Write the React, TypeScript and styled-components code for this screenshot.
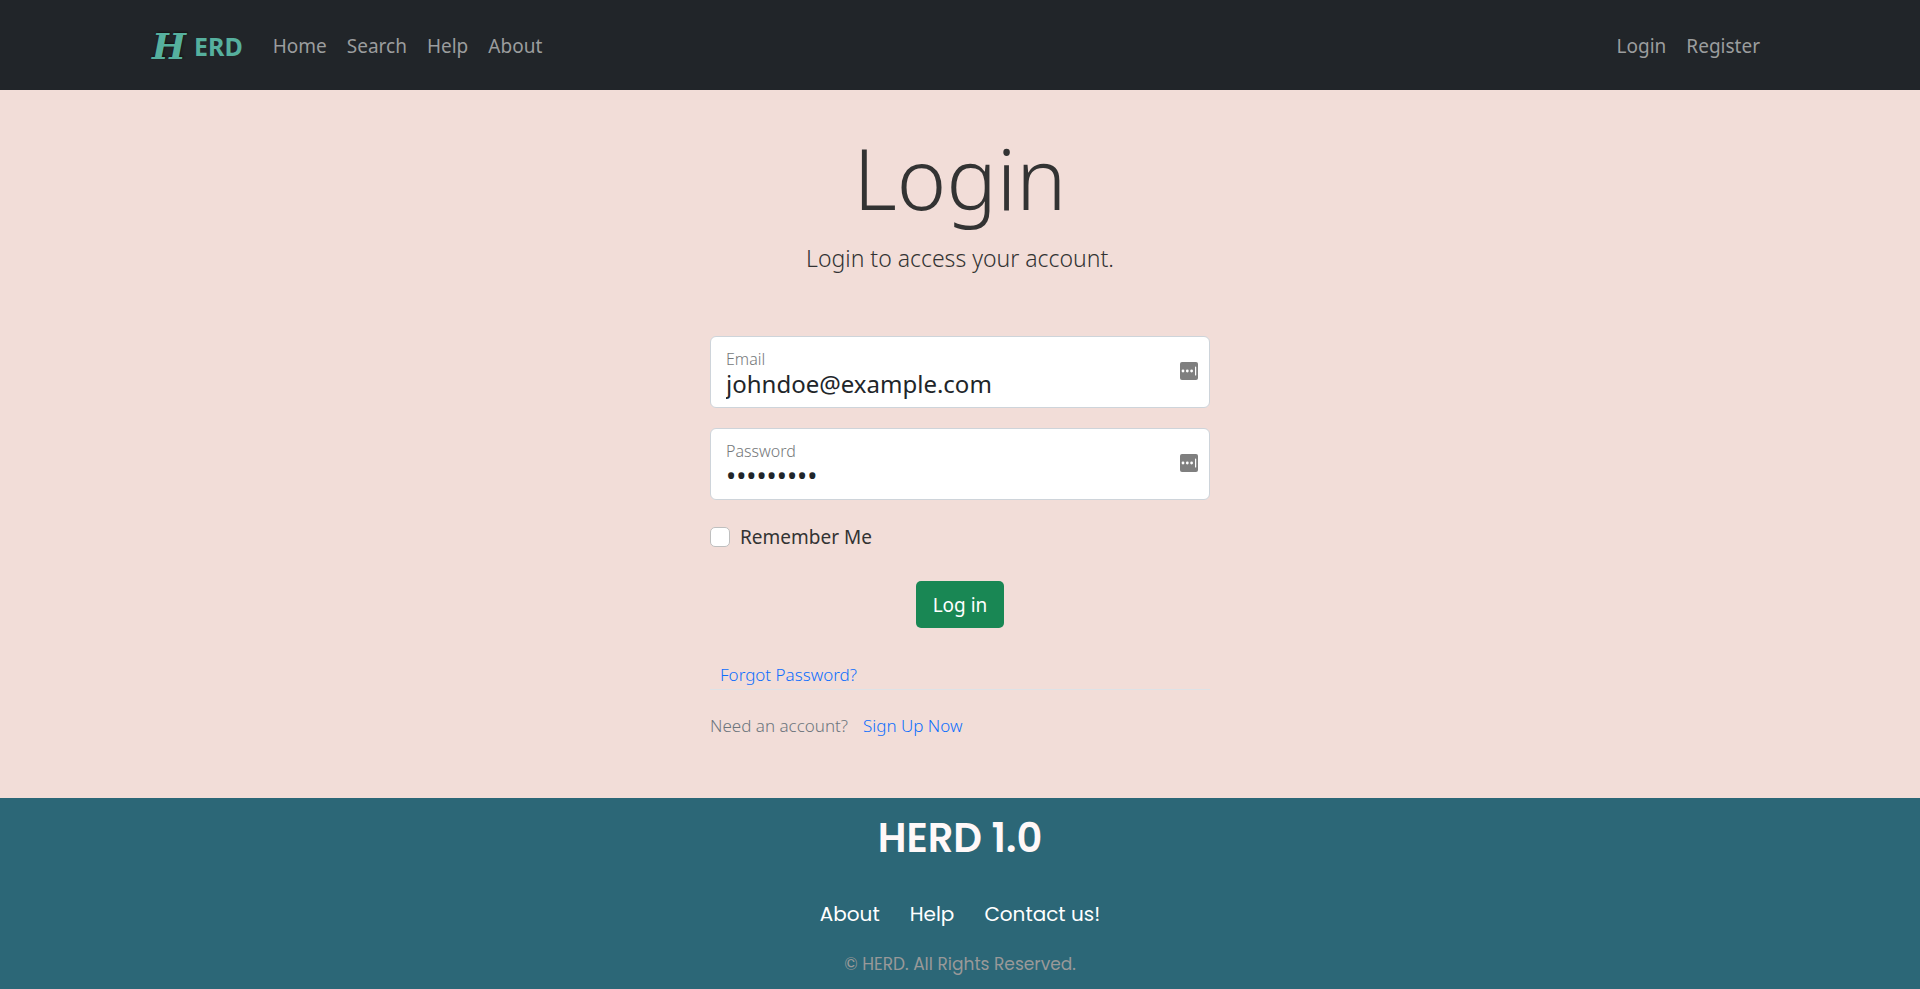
import React, { useState } from "react";
import styled, { createGlobalStyle } from "styled-components";

const sans = `"Segoe UI", "Noto Sans", "Open Sans", sans-serif`;
const geometric = `Poppins, Inter, sans-serif`;

const GlobalStyle = createGlobalStyle`
  *, *::before, *::after { box-sizing: border-box; }
  html, body, #root { min-height: 100vh; }
  body {
    margin: 0;
    background: #f2ddd8;
    color: #333;
    font-family: ${sans};
    font-size: 19px;
    line-height: 30px;
  }
  a { text-decoration: none; }
  h1, h2, p, ul { margin: 0; padding: 0; font-weight: 400; }
`;

const Page = styled.div`
  display: flex;
  flex-direction: column;
  min-height: 100vh;
`;

const Header = styled.header`
  background: #212529;
`;

const Container = styled.nav`
  display: flex;
  align-items: center;
  max-width: 1650px;
  min-height: 90px;
  margin: 0 auto;
  padding: 2px 15px 0;
`;

const Brand = styled.a`
  display: flex;
  align-items: center;
  gap: 8px;
  margin-right: 20px;
  padding-left: 2px;
  color: #56b09e;
  font-size: 25px;
  font-weight: 700;
`;

const Initial = styled.span`
  font-family: "DejaVu Serif", serif;
  font-size: 36px;
  font-style: italic;
  line-height: 36px;
  text-shadow: 1px -1px 2px #111;
`;

const NavList = styled.ul<{ $end?: boolean }>`
  display: flex;
  list-style: none;
  margin-left: ${(p) => (p.$end ? "auto" : "0")};
`;

const NavLink = styled.a`
  display: block;
  padding: 10px;
  color: #9b9d9e;
`;

const Main = styled.main`
  display: flex;
  flex-direction: column;
  align-items: center;
  padding: 36px 15px 57px;
`;

const Title = styled.h1`
  font-size: 84px;
  font-weight: 300;
  line-height: 104px;
`;

const Lead = styled.p`
  margin-top: 9px;
  font-size: 23px;
  font-weight: 300;
  line-height: 38px;
`;

const Form = styled.form`
  display: flex;
  flex-direction: column;
  width: 100%;
  max-width: 500px;
  margin-top: 59px;
`;

const Field = styled.div`
  display: flex;
  align-items: center;
  min-height: 72px;
  margin-bottom: 20px;
  padding: 12px 11px 8px 15px;
  background: #fff;
  border: 1px solid #ced4da;
  border-radius: 6px;

  svg {
    margin-bottom: 6px;
  }
`;

const FieldBody = styled.div`
  flex: 1;
  display: flex;
  flex-direction: column;
`;

const FieldLabel = styled.label`
  color: #75787a;
  font-size: 16px;
  font-weight: 300;
  line-height: 20px;
`;

const Input = styled.input`
  width: 100%;
  height: 30px;
  padding: 0;
  border: 0;
  outline: 0;
  background: transparent;
  color: #212529;
  font-family: ${sans};
  font-size: ${(p) => (p.type === "password" ? "27px" : "24px")};
  line-height: 30px;
`;

const Remember = styled.label`
  display: flex;
  align-items: center;
  gap: 10px;
  align-self: flex-start;
  margin-top: 2px;
`;

const Checkbox = styled.input`
  appearance: none;
  width: 20px;
  height: 20px;
  margin: 0;
  background: #fff;
  border: 1px solid #bfbfbf;
  border-radius: 5px;
  &:checked { background: #0d6efd; }
`;

const Submit = styled.button`
  align-self: center;
  height: 47px;
  margin-top: 29px;
  padding: 0 17px;
  border: 0;
  border-radius: 5px;
  background: #198754;
  color: #fff;
  font-family: ${sans};
  font-size: 19px;
`;

const Forgot = styled.div`
  margin-top: 33px;
  padding: 0 10px;
  border-bottom: 1px solid #dee2e6;
  font-size: 17px;
  font-weight: 300;
  line-height: 28px;
`;

const SignUp = styled.p`
  display: flex;
  gap: 15px;
  margin-top: 21px;
  color: #6c757d;
  font-size: 17px;
  font-weight: 300;
  line-height: 30px;
`;

const BlueLink = styled.a`
  color: #0d6efd;
`;

const Footer = styled.footer`
  flex: 1;
  display: flex;
  flex-direction: column;
  align-items: center;
  padding: 15px 15px 9px;
  background: #2c6777;
  font-family: ${geometric};
`;

const FooterTitle = styled.h2`
  color: #fff8f8;
  font-size: 40px;
  font-weight: 600;
  line-height: 50px;
`;

const FooterLinks = styled.nav`
  display: flex;
  gap: 30px;
  margin-top: 36px;
`;

const FooterLink = styled.a`
  color: #fff;
  font-size: 20px;
`;

const Copyright = styled.p`
  margin-top: 20px;
  color: #999;
  font-size: 17px;
`;

const ManagerIcon = () => (
  <svg width="18" height="18" viewBox="0 0 18 18" aria-hidden="true">
    <rect width="18" height="18" rx="2" fill="#7f7f7f" />
    <g fill="#fff">
      <circle cx="3" cy="9" r="1.4" />
      <circle cx="7.3" cy="9" r="1.4" />
      <circle cx="11.6" cy="9" r="1.4" />
      <rect x="15" y="4.5" width="1.2" height="9" rx="0.6" />
    </g>
  </svg>
);

interface TextFieldProps {
  id: string;
  label: string;
  type: string;
  initial: string;
}

const TextField = ({ id, label, type, initial }: TextFieldProps) => {
  const [value, setValue] = useState(initial);
  return (
    <Field>
      <FieldBody>
        <FieldLabel htmlFor={id}>{label}</FieldLabel>
        <Input id={id} type={type} value={value} onChange={(e) => setValue(e.target.value)} />
      </FieldBody>
      <ManagerIcon />
    </Field>
  );
};

const NavItems = ({ items, end }: { items: string[]; end?: boolean }) => (
  <NavList $end={end}>
    {items.map((item) => (
      <li key={item}>
        <NavLink href={`#${item.toLowerCase()}`}>{item}</NavLink>
      </li>
    ))}
  </NavList>
);

export default function App() {
  return (
    <Page>
      <GlobalStyle />
      <Header>
        <Container>
          <Brand href="#home">
            <Initial>H</Initial>
            <span>ERD</span>
          </Brand>
          <NavItems items={["Home", "Search", "Help", "About"]} />
          <NavItems items={["Login", "Register"]} end />
        </Container>
      </Header>
      <Main>
        <Title>Login</Title>
        <Lead>Login to access your account.</Lead>
        <Form onSubmit={(e) => e.preventDefault()}>
          <TextField id="email" label="Email" type="email" initial="johndoe@example.com" />
          <TextField id="password" label="Password" type="password" initial="password1" />
          <Remember>
            <Checkbox type="checkbox" />
            Remember Me
          </Remember>
          <Submit type="submit">Log in</Submit>
          <Forgot>
            <BlueLink href="#forgot">Forgot Password?</BlueLink>
          </Forgot>
          <SignUp>
            Need an account?
            <BlueLink href="#register">Sign Up Now</BlueLink>
          </SignUp>
        </Form>
      </Main>
      <Footer>
        <FooterTitle>HERD 1.0</FooterTitle>
        <FooterLinks>
          <FooterLink href="#about">About</FooterLink>
          <FooterLink href="#help">Help</FooterLink>
          <FooterLink href="#contact">Contact us!</FooterLink>
        </FooterLinks>
        <Copyright>© HERD. All Rights Reserved.</Copyright>
      </Footer>
    </Page>
  );
}
